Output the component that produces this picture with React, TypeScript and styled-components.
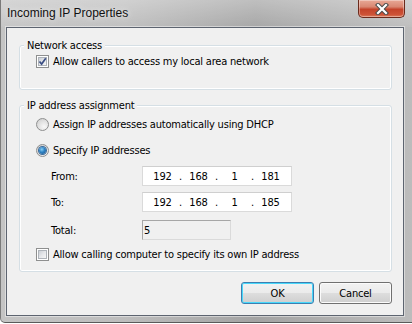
import React from "react";
import styled, { createGlobalStyle } from "styled-components";

const BODY_FONT = `"DejaVu Sans Condensed", "Liberation Sans", Arial, sans-serif`;

const GlobalStyle = createGlobalStyle`
  html, body { margin: 0; padding: 0; background: #ffffff; }
  body { font-family: ${BODY_FONT}; font-size: 11px; color: #000; letter-spacing: -0.2px; }
  * { box-sizing: border-box; }
`;

const Window = styled.div`
  width: 412px;
  height: 323px;
  display: flex;
  flex-direction: column;
  background: linear-gradient(90deg, #c4c4c4 0%, #bdbdbd 30%, #a3a3a3 62%, #b3b3b3 85%, #bcbcbc 100%);
  border-bottom: 1px solid #5a5a5a;
  border-left: 1px solid #7a7a7a;
  border-bottom-left-radius: 5px;
`;

const TitleBar = styled.div`
  height: 27px;
  display: flex;
  align-items: flex-start;
  padding-left: 6px;
  padding-right: 7px;
  background: linear-gradient(180deg, rgba(255,255,255,0.3) 0%, rgba(255,255,255,0.05) 100%);
`;

const Title = styled.div`
  font-family: "Liberation Sans", Arial, sans-serif;
  font-size: 12px;
  letter-spacing: 0;
  line-height: 15px;
  padding-top: 6px;
  color: #111;
  text-shadow: 0 0 6px rgba(255,255,255,0.9);
`;

const CloseButton = styled.div`
  margin-left: auto;
  width: 47px;
  height: 18px;
  display: flex;
  align-items: center;
  justify-content: center;
  border: 1px solid #6b2a1c;
  border-top: none;
  border-radius: 0 0 5px 5px;
  background: linear-gradient(180deg, #e8a896 0%, #d98772 40%, #c4432a 55%, #cd5236 85%, #dc7b5c 100%);
  box-shadow: inset 0 0 0 1px rgba(255,255,255,0.35);
`;

const Client = styled.div`
  flex: 1;
  margin: 0 8px 6px 5px;
  border: 1px solid #5d6470;
  background: #f0f0f0;
  padding: 17px 11px 11px 12px;
  display: flex;
  flex-direction: column;
  box-shadow: 0 0 0 1px rgba(255,255,255,0.45);
`;

const Group = styled.div<{ $pt: number; $pb: number; $mt?: number }>`
  position: relative;
  border: 1px solid #d5dfe5;
  border-radius: 3px;
  padding: ${(p) => p.$pt}px 10px ${(p) => p.$pb}px 16px;
  margin-top: ${(p) => p.$mt ?? 0}px;
  display: flex;
  flex-direction: column;
  box-shadow: inset 0 0 0 1px #ffffff;
`;

const Legend = styled.span`
  position: absolute;
  top: -8px;
  left: 4px;
  padding: 0 3px;
  line-height: 15px;
  background: #f0f0f0;
`;

const Row = styled.label<{ $mt?: number }>`
  display: flex;
  align-items: center;
  height: 16px;
  gap: 4px;
  margin-top: ${(p) => p.$mt ?? 0}px;
`;

const Box = styled.span`
  width: 13px;
  height: 13px;
  border: 1px solid #8e8f8f;
  background: #fff;
  padding: 1px;
  display: inline-flex;
  flex-shrink: 0;
`;

const BoxInner = styled.span`
  flex: 1;
  position: relative;
  background: linear-gradient(135deg, #cbcfd5 0%, #e4e6e9 50%, #f6f6f6 100%);
  border: 1px solid #aeb3b9;
`;

const Radio = styled.span`
  width: 13px;
  height: 13px;
  border-radius: 50%;
  border: 1px solid #8e8f8f;
  background: radial-gradient(circle at 65% 70%, #f8f8f8 0%, #e2e2e2 50%, #c9c9c9 100%);
  display: inline-flex;
  align-items: center;
  justify-content: center;
  flex-shrink: 0;
`;

const RadioDot = styled.span`
  width: 7px;
  height: 7px;
  border-radius: 50%;
  background: radial-gradient(circle at 40% 35%, #8ad0f5 0%, #2d82c4 45%, #1b4f86 100%);
  box-shadow: 0 0 0 1px #3a6a9a;
`;

const Fields = styled.div`
  display: grid;
  grid-template-columns: 91px auto;
  align-items: center;
  margin: 8px 0 0 15px;
  row-gap: 6px;
`;

const FieldLabel = styled.span<{ $mt?: number }>`
  margin-top: ${(p) => p.$mt ?? 0}px;
`;

const IpBox = styled.div`
  width: 150px;
  height: 20px;
  border: 1px solid #dadada;
  border-top-color: #cfcfcf;
  background: #fff;
  display: flex;
  align-items: center;
  padding-left: 4px;
`;

const Seg = styled.span`
  width: 31px;
  text-align: center;
`;

const Dot = styled.span`
  width: 5px;
  text-align: center;
`;

const TotalBox = styled.div<{ $mt?: number }>`
  width: 89px;
  height: 20px;
  border: 1px solid #dadada;
  border-top-color: #a6a6a6;
  border-left-color: #a6a6a6;
  background: #f0f0f0;
  display: flex;
  align-items: center;
  padding-left: 1px;
  margin-top: ${(p) => p.$mt ?? 0}px;
`;

const Buttons = styled.div`
  display: flex;
  justify-content: flex-end;
  gap: 5px;
  margin-top: auto;
`;

const Button = styled.button<{ $focus?: boolean }>`
  width: 73px;
  height: 22px;
  font-family: ${BODY_FONT};
  font-size: 11px;
  letter-spacing: -0.2px;
  color: #000;
  border: 1px solid ${(p) => (p.$focus ? "#3c7fb1" : "#707070")};
  border-radius: 3px;
  background: linear-gradient(180deg, #f2f2f2 0%, #ebebeb 48%, #dddddd 52%, #cfcfcf 100%);
  box-shadow: inset 0 0 0 1px ${(p) => (p.$focus ? "#48d8fb" : "#fbfbfb")};
  padding: 0;
`;

const IP = ({ parts }: { parts: string[] }) => (
  <IpBox>
    {parts.map((p, i) => (
      <React.Fragment key={i}>
        <Seg>{p}</Seg>
        {i < 3 && <Dot>.</Dot>}
      </React.Fragment>
    ))}
  </IpBox>
);

const Check = ({ checked }: { checked?: boolean }) => (
  <Box>
    <BoxInner>
      {checked && (
        <svg width="11" height="11" viewBox="0 0 11 11" style={{ position: "absolute", left: -2, top: -2 }}>
          <path d="M2.5 5.5 L4.6 8 L8.8 2.2" fill="none" stroke="#3b4e84" strokeWidth="1.7" />
        </svg>
      )}
    </BoxInner>
  </Box>
);

export default function App() {
  return (
    <>
      <GlobalStyle />
      <Window>
        <TitleBar>
          <Title>Incoming IP Properties</Title>
          <CloseButton>
            <svg width="14" height="12" viewBox="0 0 14 12">
              <path d="M3 2 L11 10 M11 2 L3 10" stroke="#4a4a4a" strokeWidth="4.2" strokeLinecap="square" />
              <path d="M3 2 L11 10 M11 2 L3 10" stroke="#ffffff" strokeWidth="2.2" strokeLinecap="square" />
            </svg>
          </CloseButton>
        </TitleBar>
        <Client>
          <Group $pt={7} $pb={20}>
            <Legend>Network access</Legend>
            <Row>
              <Check checked />
              <span>Allow callers to access my local area network</span>
            </Row>
          </Group>
          <Group $pt={10} $pb={9} $mt={15}>
            <Legend>IP address assignment</Legend>
            <Row>
              <Radio />
              <span>Assign IP addresses automatically using DHCP</span>
            </Row>
            <Row $mt={10}>
              <Radio>
                <RadioDot />
              </Radio>
              <span>Specify IP addresses</span>
            </Row>
            <Fields>
              <FieldLabel>From:</FieldLabel>
              <IP parts={["192", "168", "1", "181"]} />
              <FieldLabel>To:</FieldLabel>
              <IP parts={["192", "168", "1", "185"]} />
              <FieldLabel $mt={2}>Total:</FieldLabel>
              <TotalBox $mt={2}>5</TotalBox>
            </Fields>
            <Row $mt={6}>
              <Check />
              <span>Allow calling computer to specify its own IP address</span>
            </Row>
          </Group>
          <Buttons>
            <Button $focus>OK</Button>
            <Button>Cancel</Button>
          </Buttons>
        </Client>
      </Window>
    </>
  );
}
